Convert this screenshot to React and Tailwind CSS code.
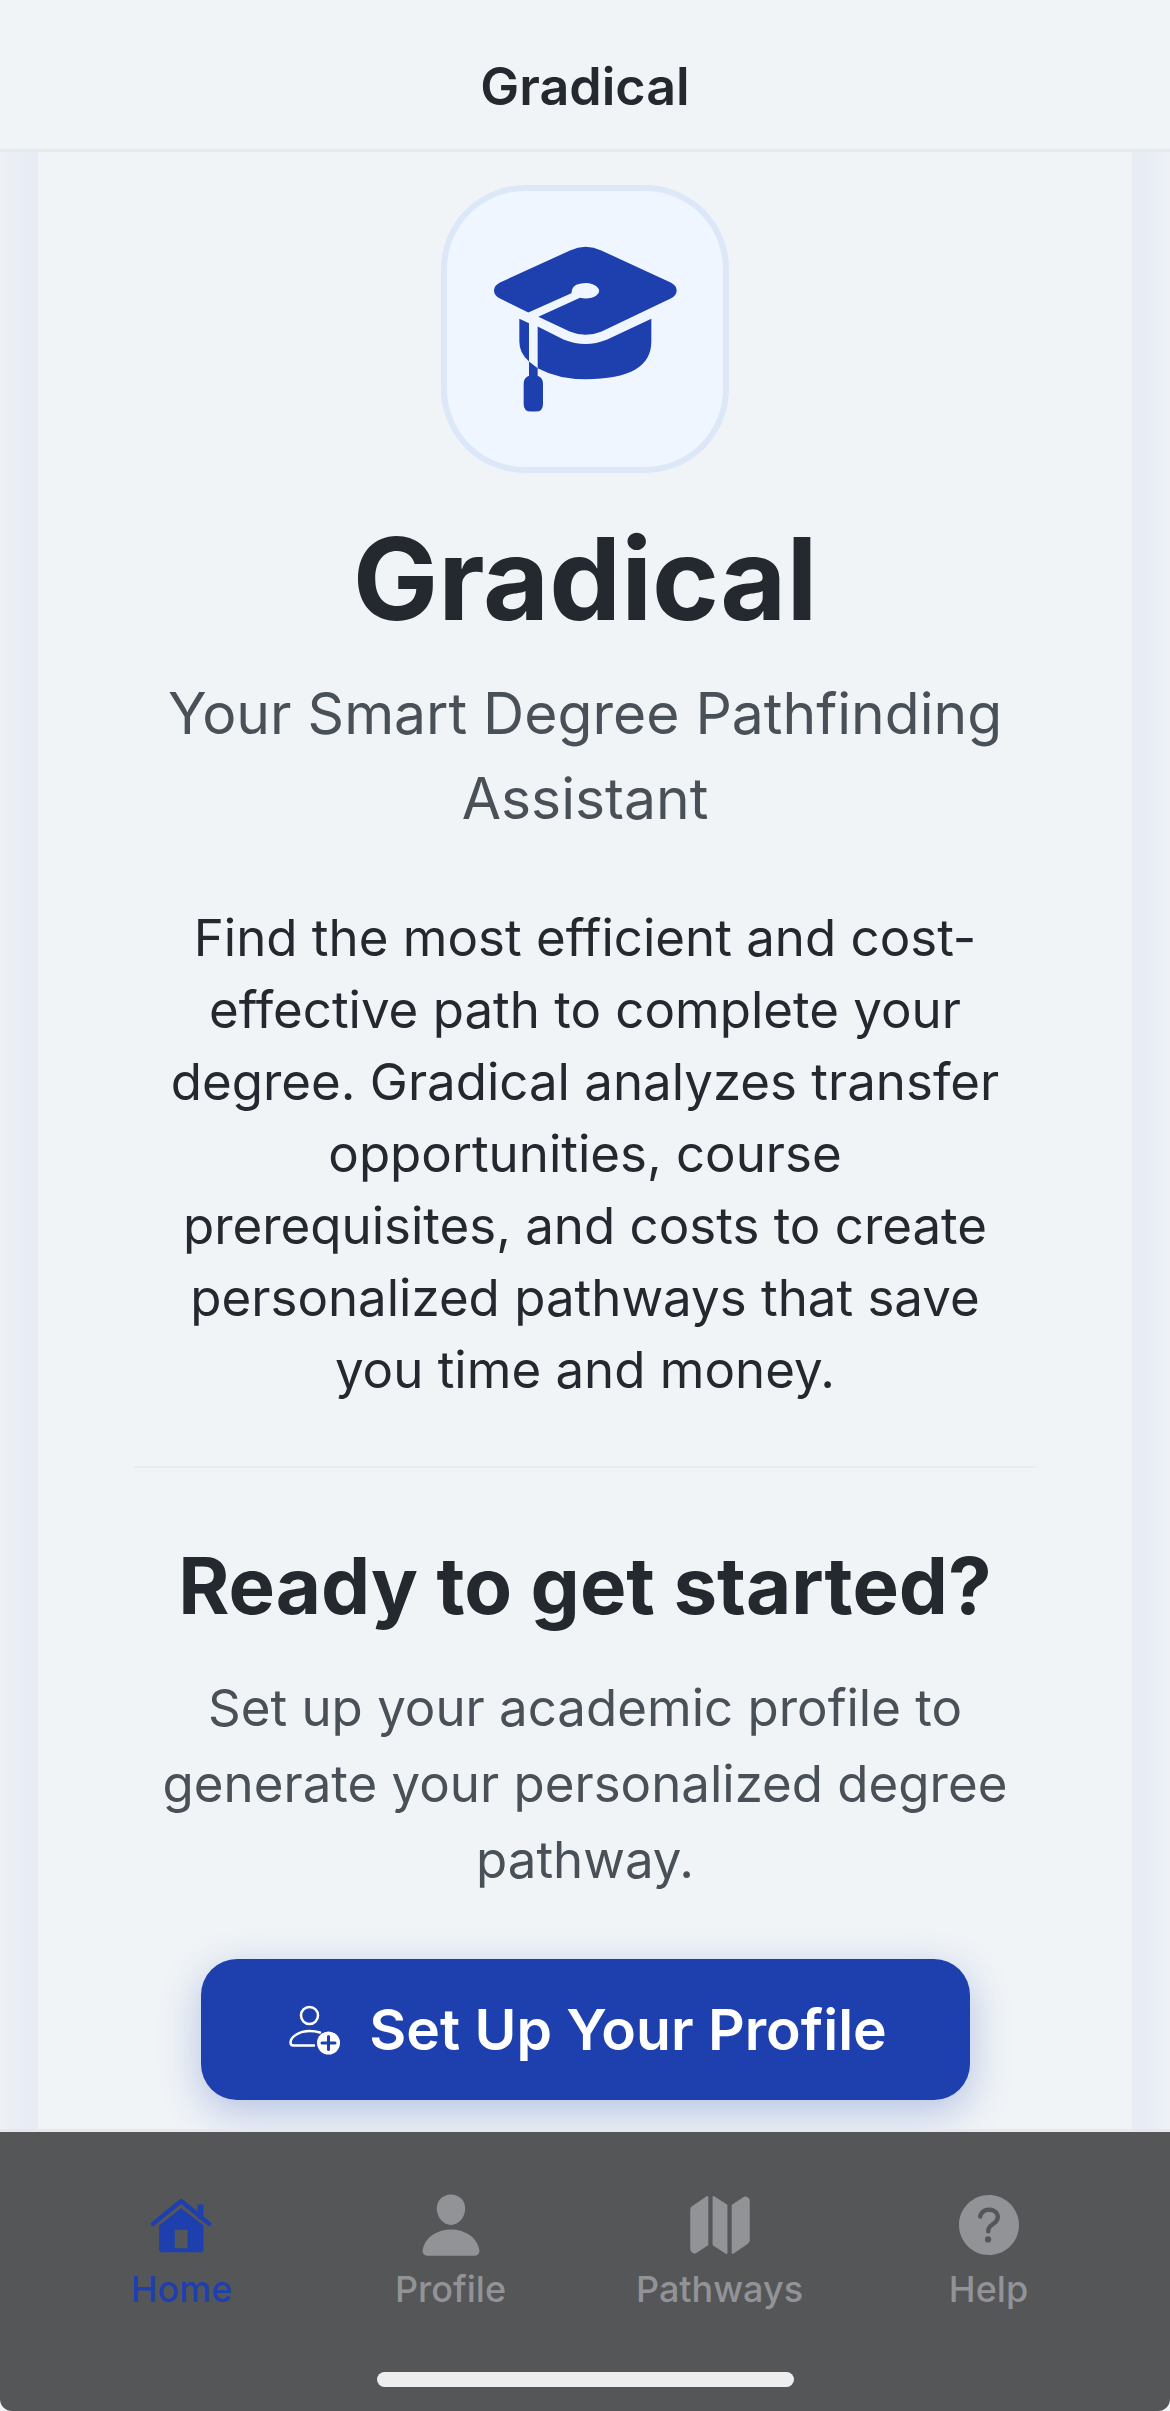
import { IoPerson, IoMap, IoHelpCircle } from 'react-icons/io5'

function CapIcon() {
  return (
    <svg viewBox="210 220 570 515" className="w-[190px] h-[172px] text-[#1e40af]" fill="currentColor">
      <path d="M450 242Q497 220 544 242L752 338Q770 347 770 362Q770 377 752 386L545 485Q497 505 449 485L355 441L480 384Q510 390 530 376Q545 364 530 350Q510 334 480 342Q455 346 454 370L325 428L240 386Q222 377 222 362Q222 347 240 338Z" />
      <path d="M298 447L327 460V575Q298 550 298 515ZM353 470L432 510Q497 535 560 510L694 447V515Q694 628 497 628Q415 628 353 595Z" />
      <path d="M327 575L353 595V618Q369 624 369 642V703Q369 725 347 725H333Q311 725 311 703V642Q311 624 327 618Z" />
    </svg>
  )
}

function HomeIcon() {
  return (
    <svg viewBox="150 80 200 170" className="w-[67px] h-[57px] text-[#1e40af]" fill="currentColor">
      <path fillRule="evenodd" d="M183 165L249 113L316 165V235Q316 245 306 245H193Q183 245 183 235ZM230 178V233H268V178Z" />
      <path d="M298 102H316V145H298Z" />
      <path d="M165 160L249 92L333 160" fill="none" stroke="currentColor" strokeWidth="13" strokeLinecap="round" strokeLinejoin="round" />
    </svg>
  )
}

function ProfileAddIcon() {
  return (
    <svg viewBox="0 0 52 52" className="w-[52px] h-[52px] text-white" fill="none" stroke="currentColor" strokeWidth="2.5">
      <circle cx="20.5" cy="11.5" r="8.5" />
      <path d="M31 28.5C27 27.3 24 27 20.5 27C10 27 1.5 33 1.5 38.5C1.5 40.5 2.5 41.5 4.5 41.5H25" strokeLinecap="round" />
      <circle cx="39.5" cy="39" r="11.5" fill="currentColor" stroke="none" />
      <path d="M39.5 32.5V45.5M33 39H46" stroke="#1e40af" strokeWidth="3" strokeLinecap="round" />
    </svg>
  )
}

const tabs = [
  { label: 'Home', icon: <HomeIcon />, active: true },
  { label: 'Profile', icon: <IoPerson className="text-[70px]" /> },
  { label: 'Pathways', icon: <IoMap className="text-[68px]" /> },
  { label: 'Help', icon: <IoHelpCircle className="text-[80px]" /> },
]

export default function App() {
  return (
    <div className="w-[1170px] h-[2411px] flex flex-col overflow-hidden bg-[#f0f4f7] font-['Inter',sans-serif] text-[#24282f]">
      <header className="h-[152px] shrink-0 flex items-center justify-center pt-[24px] bg-[#f0f4f7] border-b-[3px] border-[#e5e9ec]">
        <h1 className="text-[52px] font-semibold leading-none">Gradical</h1>
      </header>

      <main className="flex-1 min-h-0 overflow-hidden px-[38px] bg-[linear-gradient(90deg,#eef2f6_0,#e8edf5_24px,#e8edf5_1146px,#eef2f6_1170px)]">
        <div className="bg-[#f0f4f7] h-full flex flex-col items-center px-[96px] pt-[33px]">
          <div className="w-[288px] h-[288px] shrink-0 flex items-center justify-center rounded-[84px] bg-[#eff6ff] border-[6px] border-[#dce8f8]">
            <CapIcon />
          </div>

          <h2 className="mt-[46px] text-[114px] leading-[120px] font-bold">Gradical</h2>
          <p className="mt-[32px] text-[57px] leading-[85px] text-[#495057] text-center">Your Smart Degree Pathfinding Assistant</p>
          <p className="mt-[61px] px-[24px] text-[51px] leading-[72px] text-center">
            Find the most efficient and cost-effective path to complete your degree. Gradical analyzes transfer opportunities, course prerequisites, and costs to create personalized pathways that save you time and money.
          </p>

          <div className="w-full h-[2px] mt-[60px] shrink-0 bg-[#e9ecef]" />

          <h3 className="mt-[72px] text-[78px] leading-[92px] font-bold text-center whitespace-nowrap">Ready to get started?</h3>
          <p className="mt-[38px] text-[51px] leading-[76px] text-[#495057] text-center">Set up your academic profile to generate your personalized degree pathway.</p>

          <button className="mt-[61px] w-[769px] h-[141px] shrink-0 flex items-center justify-center gap-[28px] pl-[6px] rounded-[36px] bg-[#1e40af] text-white text-[57px] font-semibold shadow-[0_12px_40px_rgba(30,64,175,0.28)]">
            <ProfileAddIcon />
            Set Up Your Profile
          </button>
        </div>
      </main>

      <nav className="h-[282px] shrink-0 bg-[#555658] border-t-[3px] border-[#e5e9ec] rounded-b-[12px] flex flex-col">
        <div className="flex px-[47px] pt-[57px]">
          {tabs.map((tab) => (
            <div key={tab.label} className={`flex-1 flex flex-col items-center ${tab.active ? 'text-[#1e40af]' : 'text-[#929396]'}`}>
              <div className="h-[72px] flex items-center justify-center">{tab.icon}</div>
              <span className="mt-[4px] text-[36px] leading-[48px] font-medium">{tab.label}</span>
            </div>
          ))}
        </div>
        <div className="mt-auto mb-[24px] mx-auto w-[417px] h-[15px] rounded-full bg-[#eeeeee]" />
      </nav>
    </div>
  )
}
